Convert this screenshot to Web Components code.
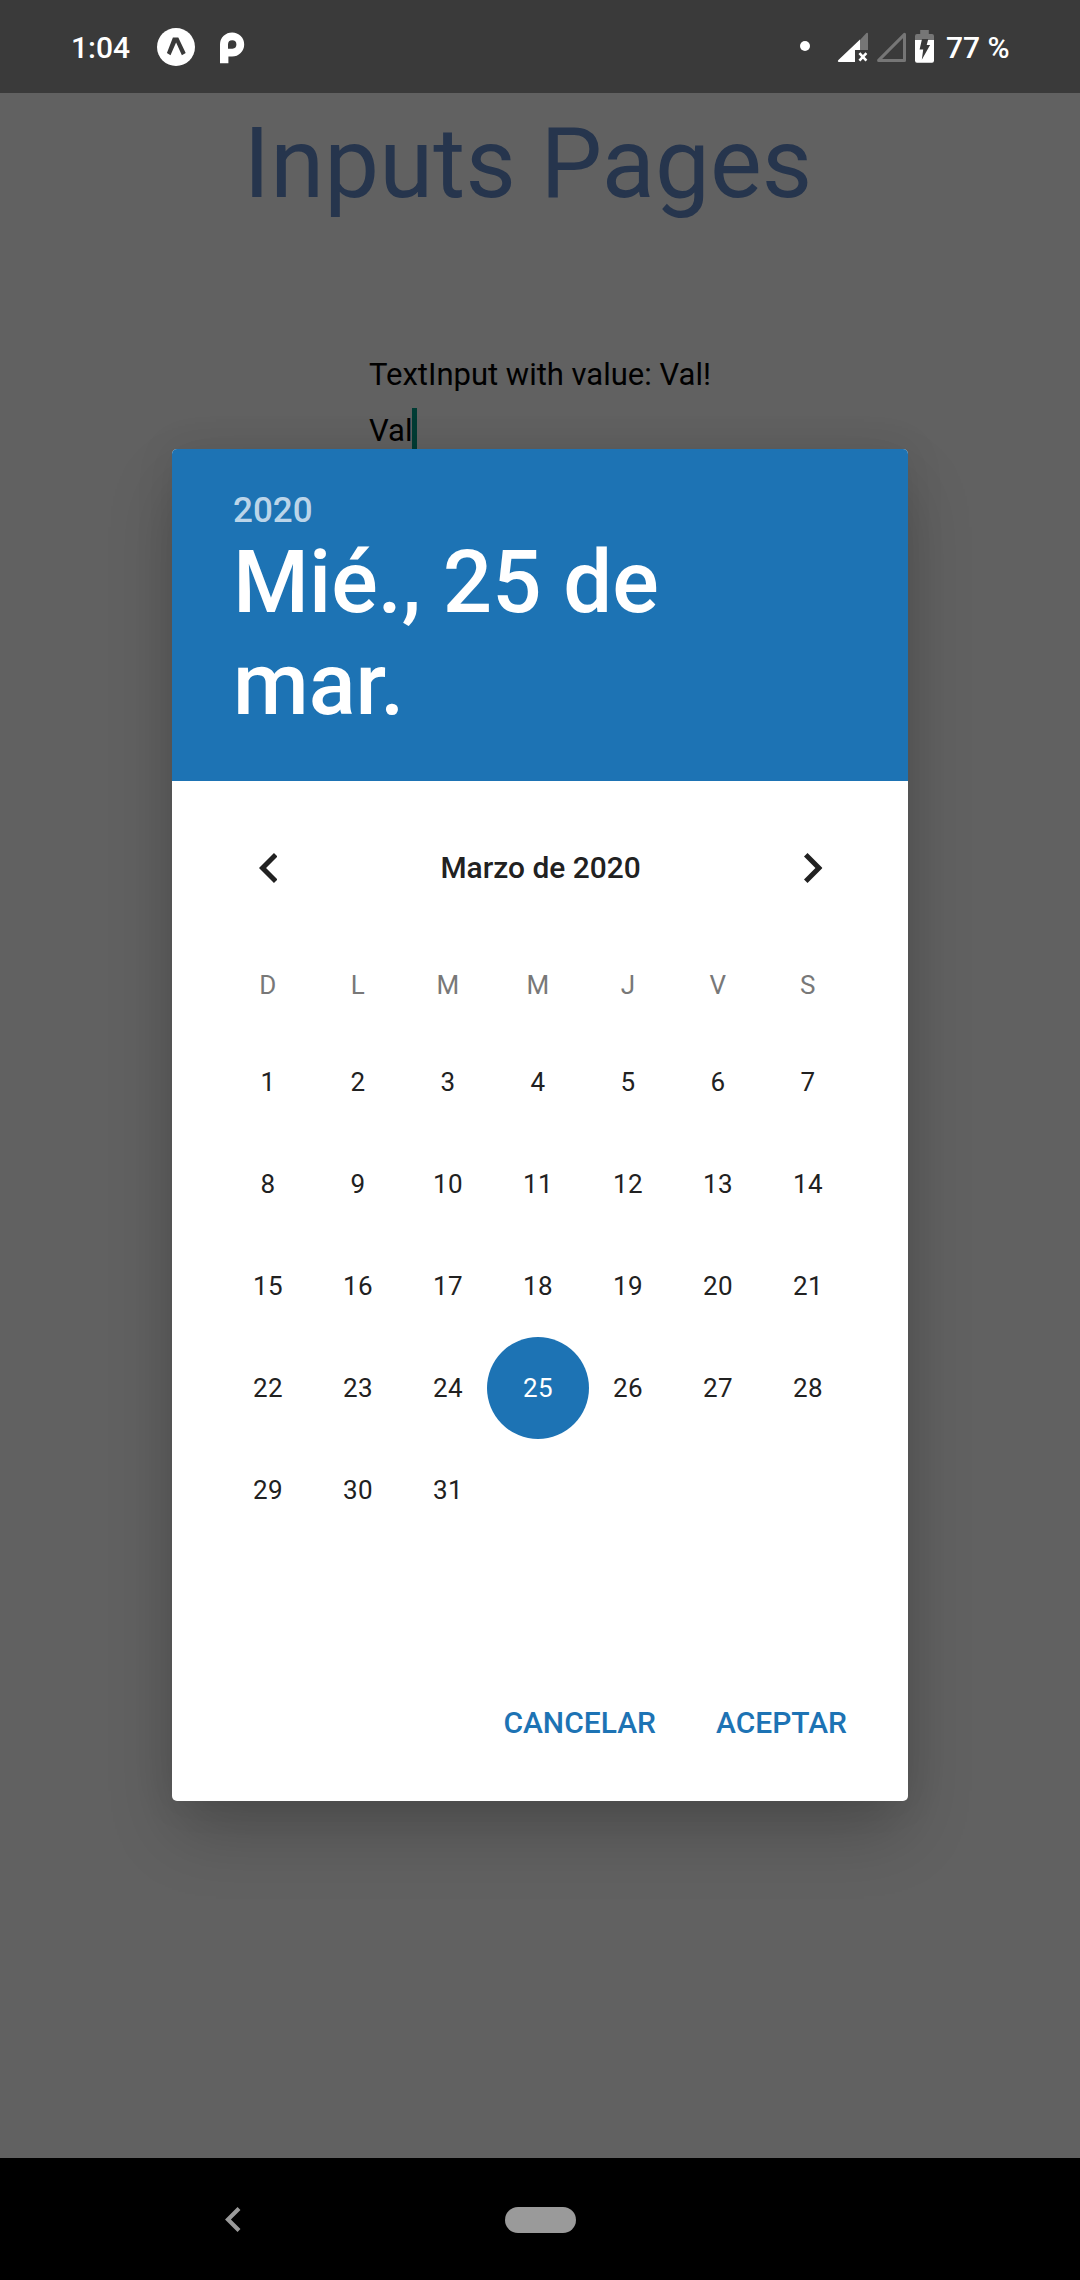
<!DOCTYPE html>
<html lang="es">
<head>
<meta charset="utf-8">
<title>Inputs Pages</title>
<style>
html,body{margin:0;padding:0;background:#616161}
body{width:1080px;height:2280px;overflow:hidden;font-family:Roboto,"Liberation Sans",sans-serif}
</style>
</head>
<body>
<phone-screen>
  <status-bar slot="status" time="1:04" battery="77 %"></status-bar>
  <inputs-page heading="Inputs Pages" value="Val"></inputs-page>
  <date-picker slot="dialog" year="2020" month="Marzo de 2020" selected="25" days="31">Mié., 25 de mar.</date-picker>
  <nav-bar slot="nav"></nav-bar>
</phone-screen>
<script>
function define(name, render) {
  customElements.define(name, class extends HTMLElement {
    connectedCallback() {
      if (this.shadowRoot) return;
      this.attachShadow({ mode: 'open' }).innerHTML = render(this);
    }
  });
}

define('phone-screen', () => `
<style>
:host{display:flex;flex-direction:column;width:1080px;height:2280px}
main{flex:1;position:relative;overflow:hidden;background:#616161}
.overlay{position:absolute;inset:0 0 1px;display:flex;align-items:center;justify-content:center}
</style>
<slot name="status"></slot>
<main><slot></slot><div class="overlay"><slot name="dialog"></slot></div></main>
<slot name="nav"></slot>`);

define('status-bar', el => `
<style>
:host{display:flex;flex:none;box-sizing:border-box;height:93px;background:#3a3a3a;color:#fff;align-items:center;padding:2px 71px 0;font-weight:500;font-size:30px;line-height:36px}
svg{display:block;flex:none}
span{white-space:nowrap}
.time{width:86px}
.expo{margin:-1px 25px 0 0}
.space{flex:1}
.icons{margin:-1px 12px 0 0}
.pct{width:63px}
</style>
<span class="time">${el.getAttribute('time')}</span>
<svg class="expo" width="38" height="38" viewBox="0 0 38 38"><circle cx="19" cy="19" r="19" fill="#fff"/><path d="M15.9 9.6h5.4L28.7 25l-3.8 2.2-5.8-12.6-5.6 12.6-3.6-2.2z" fill="#3a3a3a"/></svg>
<svg width="25" height="32" viewBox="0 0 25 32"><path fill="#fff" fill-rule="evenodd" d="M0 31.2V12.3A12.1 12.1 0 1 1 12.1 24.6H8.4V31.2zM8 16.7h4.4a4.2 4.2 0 1 0-4.4-4.2z"/></svg>
<i class="space"></i>
<svg class="icons" width="134" height="36" viewBox="800 29 134 36">
  <circle cx="805" cy="46" r="5" fill="#fff"/>
  <path d="M860 40l6.4-7q1.6-1 1.6 1V50h-8z" fill="#767676"/>
  <path d="M860 39.4V50h-5V62H839q-2-.6-.6-2z" fill="#fff"/>
  <path d="M859.4 53.2l7 7.4M866.4 53.2l-7 7.4" stroke="#fff" stroke-width="2.6"/>
  <path d="M878.6 60.4L904.5 34.4V60.4z" fill="none" stroke="#767676" stroke-width="3" stroke-linejoin="round"/>
  <path d="M915 40.5V36q0-2 2-2h3.2V30h8.6V34H932q2 0 2 2V40.5z" fill="#767676"/>
  <path d="M915 40h19v20.5q0 2.2-2 2.2H917q-2 0-2-2.2z" fill="#fff"/>
  <path d="M922 39h6.3l-1.6 6h3.4L921.8 59.8l1.4-10.4h-3.6z" fill="#3a3a3a"/>
</svg>
<span class="pct">${el.getAttribute('battery')}</span>`);

define('inputs-page', el => `
<style>
:host{display:flex;flex-direction:column;padding-top:14px;color:#000;font-size:31px}
h1{margin:0;padding-left:243.5px;font-size:97.7px;letter-spacing:.15px;line-height:114px;font-weight:400;color:#26354d;white-space:nowrap}
p{margin:136px 0 0 369px;line-height:36px;white-space:nowrap}
.field{display:flex;margin:15px 0 0 369px;line-height:46px;height:56px}
.caret{width:5px;background:#003c34}
.value{width:43px}
</style>
<h1>${el.getAttribute('heading')}</h1>
<p>TextInput with value: ${el.getAttribute('value')}!</p>
<div class="field"><span class="value">${el.getAttribute('value')}</span><i class="caret"></i></div>`);

define('chevron-icon', () => `
<style>:host{display:block;width:18.5px;height:30px}:host([flip]){transform:scaleX(-1)}svg{display:block;width:100%;height:100%}</style>
<svg viewBox="8 6 7.41 12"><path fill="currentColor" d="M15.41 7.41L14 6l-6 6 6 6 1.41-1.41L10.83 12z"/></svg>`);

define('day-cell', () => `
<style>
:host{display:flex;justify-content:center;height:102px;line-height:102px}
span{flex:none;width:102px;text-align:center;border-radius:50%}
:host([selected]) span{background:#1d73b4;color:#fff}
</style><span><slot></slot></span>`);

define('date-picker', el => {
  const days = Array.from({ length: +el.getAttribute('days') }, (_, i) => i + 1);
  return `
<style>
:host{display:flex;flex-direction:column;width:736px;height:1352px;border-radius:5px;overflow:hidden;background:#fff;color:#212121;box-shadow:0 34px 64px -6px rgba(0,0,0,.22),0 0 40px rgba(0,0,0,.08)}
header{box-sizing:border-box;height:332px;padding:41px 61px 0;background:#1d73b4;color:#fff;font-weight:500}
.year{font-size:35px;line-height:41px;color:#bbd5e9}
h2{margin:0;font-size:86.9px;line-height:102px;font-weight:500;width:480px}
.month{display:flex;align-items:center;justify-content:space-between;height:72px;margin-top:51px;padding:0 85.5px 0 86.5px;font-size:29.9px;font-weight:500}
.month span{padding-bottom:2px}
.grid{display:grid;grid-template-columns:repeat(7,90px);margin-left:51px;font-size:26px;letter-spacing:.4px}
.week{margin-top:61px;margin-bottom:26px;line-height:40px;text-align:center;color:#787878}
.days{flex:1;align-content:start}
.actions{display:flex;justify-content:flex-end;gap:60px;padding:0 61px 60px 0;font-size:30px;line-height:36px;font-weight:500;color:#1d73b4}
</style>
<header><div class="year">${el.getAttribute('year')}</div><h2><slot></slot></h2></header>
<div class="month"><chevron-icon></chevron-icon><span>${el.getAttribute('month')}</span><chevron-icon flip></chevron-icon></div>
<div class="grid week">${[...'DLMMJVS'].map(d => `<span>${d}</span>`).join('')}</div>
<div class="grid days">${days.map(d => `<day-cell${d == el.getAttribute('selected') ? ' selected' : ''}>${d}</day-cell>`).join('')}</div>
<div class="actions"><span>CANCELAR</span><span>ACEPTAR</span></div>`;
});

define('nav-bar', () => `
<style>
:host{display:flex;flex:none;box-sizing:border-box;height:122px;align-items:center;background:#000;color:#9a9a9a;padding:1px 0 0 225px;gap:264.5px}
chevron-icon{width:15.5px;height:25px}
.pill{width:71px;height:26px;border-radius:13px;background:#9a9a9a}
</style>
<chevron-icon></chevron-icon><i class="pill"></i>`);
</script>
</body>
</html>
